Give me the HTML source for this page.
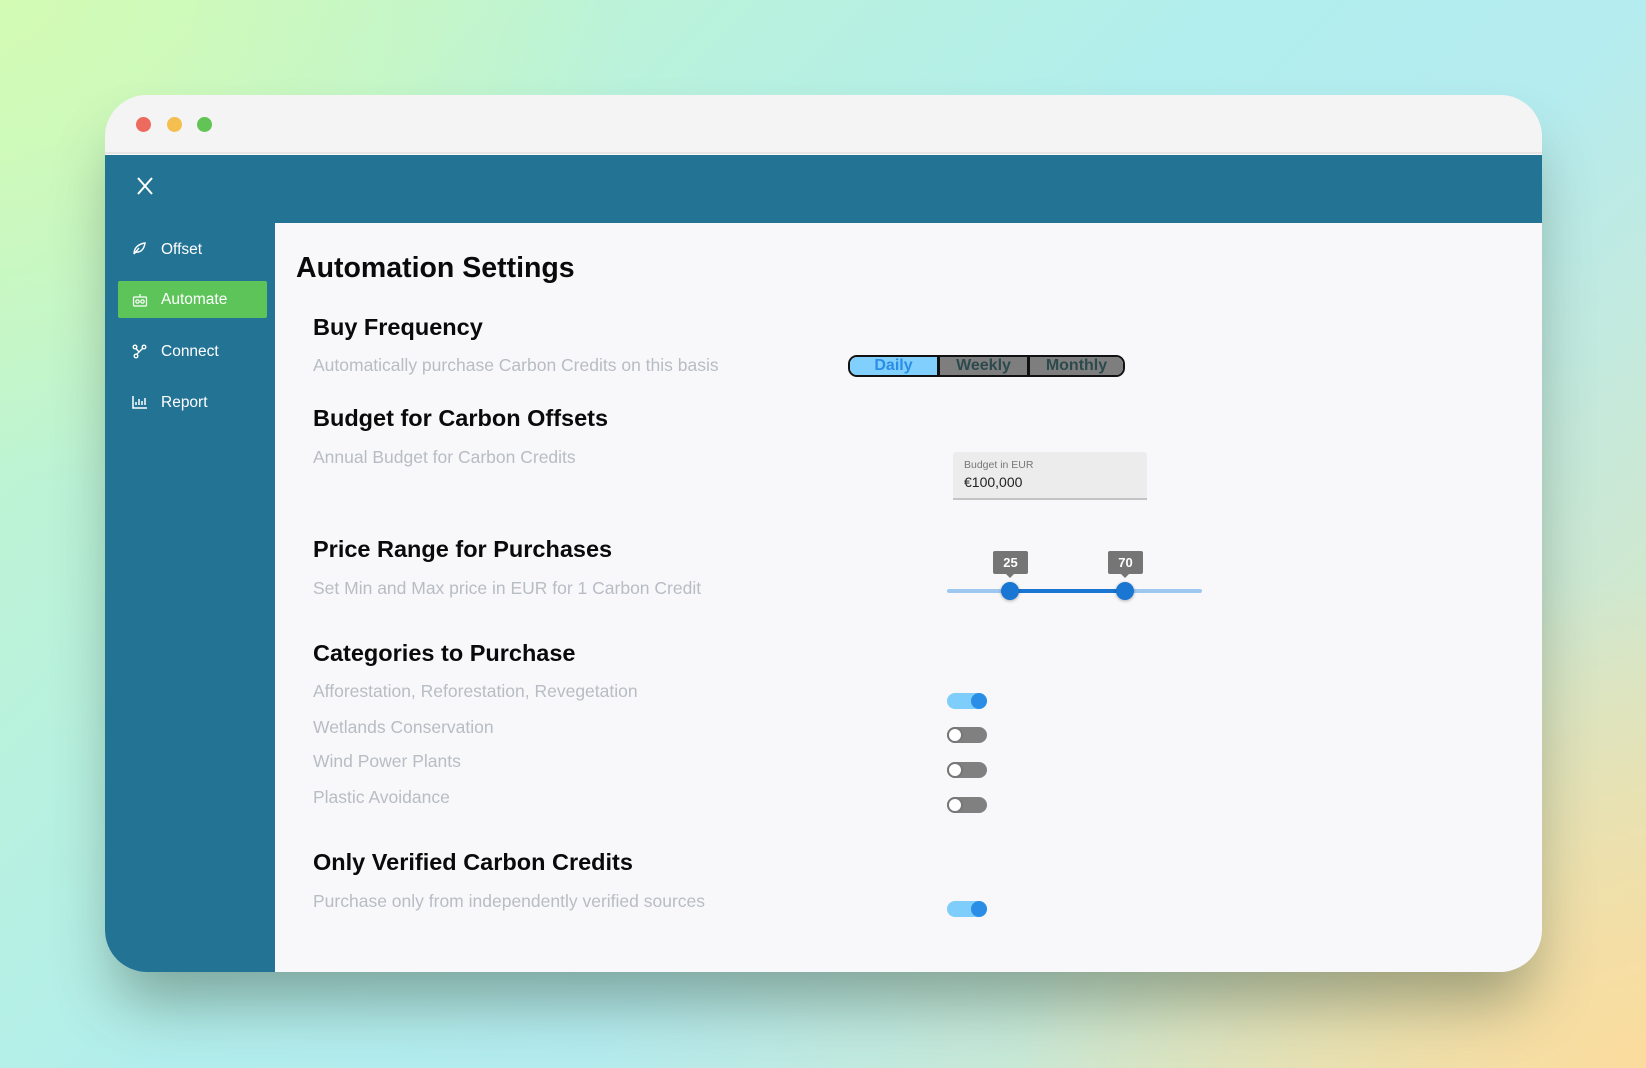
<!DOCTYPE html>
<html><head><meta charset="utf-8">
<style>
*{margin:0;padding:0;box-sizing:border-box}
html,body{width:1646px;height:1068px;overflow:hidden}
body{font-family:"Liberation Sans",sans-serif;position:relative;
background:
radial-gradient(ellipse 900px 700px at 0% 0%, #d3fbb4 0%, rgba(211,251,180,0) 70%),
radial-gradient(ellipse 900px 700px at 100% 100%, #fbdc9e 0%, rgba(251,220,158,0) 70%),
linear-gradient(135deg,#c4f7c4 0%,#b2eeed 45%,#b4ecf0 60%,#e6e4b4 100%);}
.win{position:absolute;left:105px;top:95px;width:1437px;height:877px;border-radius:42px;overflow:hidden;background:#f8f8fa;
box-shadow:0 40px 60px -10px rgba(60,80,60,0.45)}
.tb{position:absolute;left:0;top:0;width:100%;height:59px;background:#f4f4f4;border-bottom:2px solid #e6e6e6}
.dot{position:absolute;top:22px;width:15px;height:15px;border-radius:50%}
.hdr{position:absolute;left:0;top:60px;width:100%;height:68px;background:#237395}
.side{position:absolute;left:0;top:128px;width:170px;height:749px;background:#237395}
.nav{position:absolute;left:13px;width:149px;height:37px;color:#fff;font-size:15.5px;line-height:37px;padding-left:43px;border-radius:2px}
.nav svg{position:absolute;left:14px;top:11px}
.t{position:absolute;font-weight:bold;color:#0a0a0a}
.h{position:absolute;left:208px;font-size:23.5px;font-weight:bold;color:#0a0a0a;line-height:28px}
.d{position:absolute;left:208px;font-size:17.5px;color:#b8bcc4;line-height:20px}
.tg{position:absolute;left:842px;width:40px;height:16px;border-radius:8px}
.tg.on{background:#7fcdfb}.tg.off{background:#808080}
.tg i{position:absolute;top:0;width:16px;height:16px;border-radius:50%}
.tg.on i{right:0;background:#2a8ee6}
.tg.off i{left:0;background:#fff;border:2px solid #777}
</style></head><body>
<div class="win">
 <div class="tb">
  <div class="dot" style="left:31px;background:#ec6a5e"></div>
  <div class="dot" style="left:62px;background:#f4bf4f"></div>
  <div class="dot" style="left:92px;background:#61c454"></div>
 </div>
 <div class="hdr">
  <svg style="position:absolute;left:31px;top:22px" width="18" height="18" viewBox="0 0 18 18"><path d="M2 1L16 17M16 1L2 17" stroke="#fff" stroke-width="2"/></svg>
 </div>
 <div class="side">
  <div class="nav" style="top:8px"><svg width="14" height="14" viewBox="0 0 14 14" fill="none" stroke="#fff" stroke-width="1.4"><path d="M2 12C2 6 6 2 13 1C12 8 8 11 3 10M2 12L7 6"/></svg>Offset</div>
  <div class="nav" style="top:58px;background:#5dc45a"><svg width="16" height="16" viewBox="0 0 16 16" fill="none" stroke="#fff" stroke-width="1.2"><rect x="1.5" y="5" width="13" height="9" rx="1"/><circle cx="5.5" cy="9.5" r="1.7"/><circle cx="10.5" cy="9.5" r="1.7"/><path d="M8 5V2"/></svg>Automate</div>
  <div class="nav" style="top:110px"><svg width="15" height="15" viewBox="0 0 15 15" fill="none" stroke="#fff" stroke-width="1.4"><circle cx="3" cy="3" r="1.8"/><circle cx="12" cy="3" r="1.8"/><circle cx="4" cy="12" r="1.8"/><path d="M4 4.5L7 8L11 4M7 8L4.5 10.5"/></svg>Connect</div>
  <div class="nav" style="top:161px"><svg width="16" height="14" viewBox="0 0 16 14" fill="none" stroke="#fff" stroke-width="1.5"><path d="M1 1V13H15M4 10V7M7 10V4M10 10V6M13 10V3"/></svg>Report</div>
 </div>

 <div class="t" style="left:191px;top:156px;font-size:28.5px;line-height:34px">Automation Settings</div>
 <div class="h" style="top:218px">Buy Frequency</div>
 <div class="d" style="top:260px">Automatically purchase Carbon Credits on this basis</div>
 <div style="position:absolute;left:743px;top:260px;width:277px;height:22px;border:2px solid #111;border-radius:9px;overflow:hidden;display:flex;font-weight:bold;font-size:16px;line-height:18px;text-align:center">
  <div style="width:90px;background:#80cffd;color:#2a8ee6;border-right:3px solid #111">Daily</div>
  <div style="width:90px;background:#7e7e7e;color:#2c4a4e;border-right:3px solid #111">Weekly</div>
  <div style="flex:1;background:#7e7e7e;color:#2c4a4e">Monthly</div>
 </div>
 <div class="h" style="top:309px">Budget for Carbon Offsets</div>
 <div class="d" style="top:352px">Annual Budget for Carbon Credits</div>
 <div style="position:absolute;left:848px;top:357px;width:194px;height:48px;background:#ececed;border-bottom:2px solid #c4c4c4;border-radius:3px 3px 0 0">
  <div style="position:absolute;left:11px;top:7px;font-size:10.5px;color:#777">Budget in EUR</div>
  <div style="position:absolute;left:11px;top:22px;font-size:14px;color:#222">€100,000</div>
 </div>
 <div class="h" style="top:440px">Price Range for Purchases</div>
 <div class="d" style="top:483px">Set Min and Max price in EUR for 1 Carbon Credit</div>
 <div style="position:absolute;left:842px;top:494px;width:255px;height:4px;background:#9fc8f0;border-radius:2px"></div>
 <div style="position:absolute;left:905px;top:494px;width:115px;height:4px;background:#1976d2"></div>
 <div style="position:absolute;left:896px;top:487px;width:18px;height:18px;border-radius:50%;background:#1976d2;box-shadow:0 1px 3px rgba(0,0,0,.3)"></div>
 <div style="position:absolute;left:1011px;top:487px;width:18px;height:18px;border-radius:50%;background:#1976d2;box-shadow:0 1px 3px rgba(0,0,0,.3)"></div>
 <div style="position:absolute;left:888px;top:456px;width:35px;height:23px;background:#757575;border-radius:2px;color:#fff;font-weight:bold;font-size:13px;text-align:center;line-height:23px">25</div>
 <div style="position:absolute;left:901px;top:479px;border:4px solid transparent;border-top-color:#757575"></div>
 <div style="position:absolute;left:1003px;top:456px;width:35px;height:23px;background:#757575;border-radius:2px;color:#fff;font-weight:bold;font-size:13px;text-align:center;line-height:23px">70</div>
 <div style="position:absolute;left:1016px;top:479px;border:4px solid transparent;border-top-color:#757575"></div>
 <div class="h" style="top:544px">Categories to Purchase</div>
 <div class="d" style="top:586px">Afforestation, Reforestation, Revegetation</div>
 <div class="d" style="top:622px">Wetlands Conservation</div>
 <div class="d" style="top:656px">Wind Power Plants</div>
 <div class="d" style="top:692px">Plastic Avoidance</div>
 <div class="tg on" style="top:598px"><i></i></div>
 <div class="tg off" style="top:632px"><i></i></div>
 <div class="tg off" style="top:667px"><i></i></div>
 <div class="tg off" style="top:702px"><i></i></div>
 <div class="h" style="top:753px">Only Verified Carbon Credits</div>
 <div class="d" style="top:796px">Purchase only from independently verified sources</div>
 <div class="tg on" style="top:806px"><i></i></div>
</div>
</body></html>
